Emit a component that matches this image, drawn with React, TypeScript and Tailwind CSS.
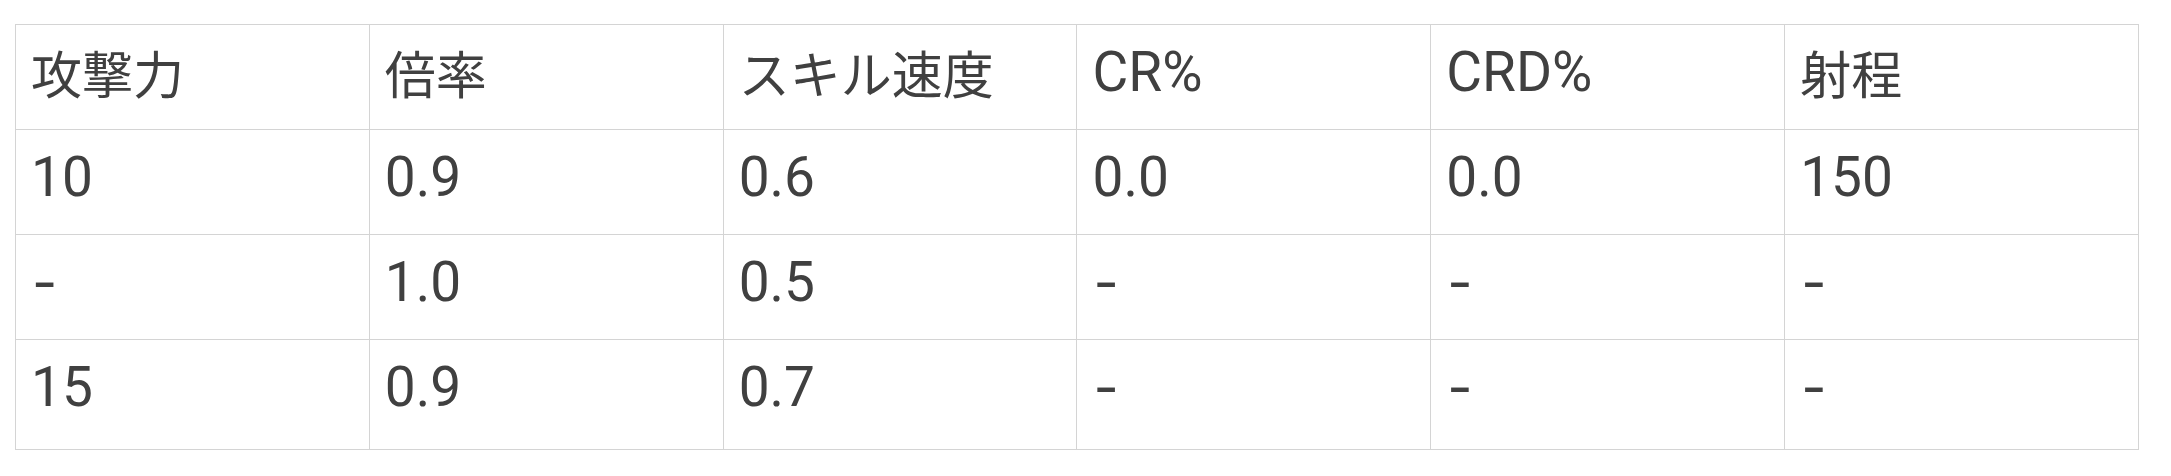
import React from 'react'

type Cell = { text: string; cjk?: boolean }

const headers: Cell[] = [
  { text: '攻撃力', cjk: true },
  { text: '倍率', cjk: true },
  { text: 'スキル速度', cjk: true },
  { text: 'CR%' },
  { text: 'CRD%' },
  { text: '射程', cjk: true },
]

const rows: string[][] = [
  ['10', '0.9', '0.6', '0.0', '0.0', '150'],
  ['-', '1.0', '0.5', '-', '-', '-'],
  ['15', '0.9', '0.7', '-', '-', '-'],
]

export default function App() {
  return (
    <div className="min-h-screen bg-white pl-[15px] pt-[24px] text-[#404040] font-['Roboto','Noto_Sans_CJK_JP',sans-serif]">
      <table className="w-[2124px] table-fixed border-collapse">
        <thead>
          <tr>
            {headers.map((h) => (
              <th
                key={h.text}
                className="h-[105px] border border-[#d4d4d4] px-[15px] pt-[17px] text-left align-top font-normal text-[55px] leading-[60px]"
              >
                <span className={h.cjk ? "text-[51px] font-['Noto_Sans_CJK_JP',sans-serif]" : ''}>{h.text}</span>
              </th>
            ))}
          </tr>
        </thead>
        <tbody>
          {rows.map((row, i) => (
            <tr key={i}>
              {row.map((v, j) => (
                <td
                  key={j}
                  className={
                    'border border-[#d4d4d4] px-[15px] pt-[17px] align-top text-[55px] leading-[60px] ' +
                    (i === rows.length - 1 ? 'h-[110px]' : 'h-[105px]')
                  }
                >
                  {/* the dash in the source is wider than Roboto's hyphen */}
                  {v === '-' ? <span className="pl-[1px] font-['Inter',sans-serif]">-</span> : v}
                </td>
              ))}
            </tr>
          ))}
        </tbody>
      </table>
    </div>
  )
}
